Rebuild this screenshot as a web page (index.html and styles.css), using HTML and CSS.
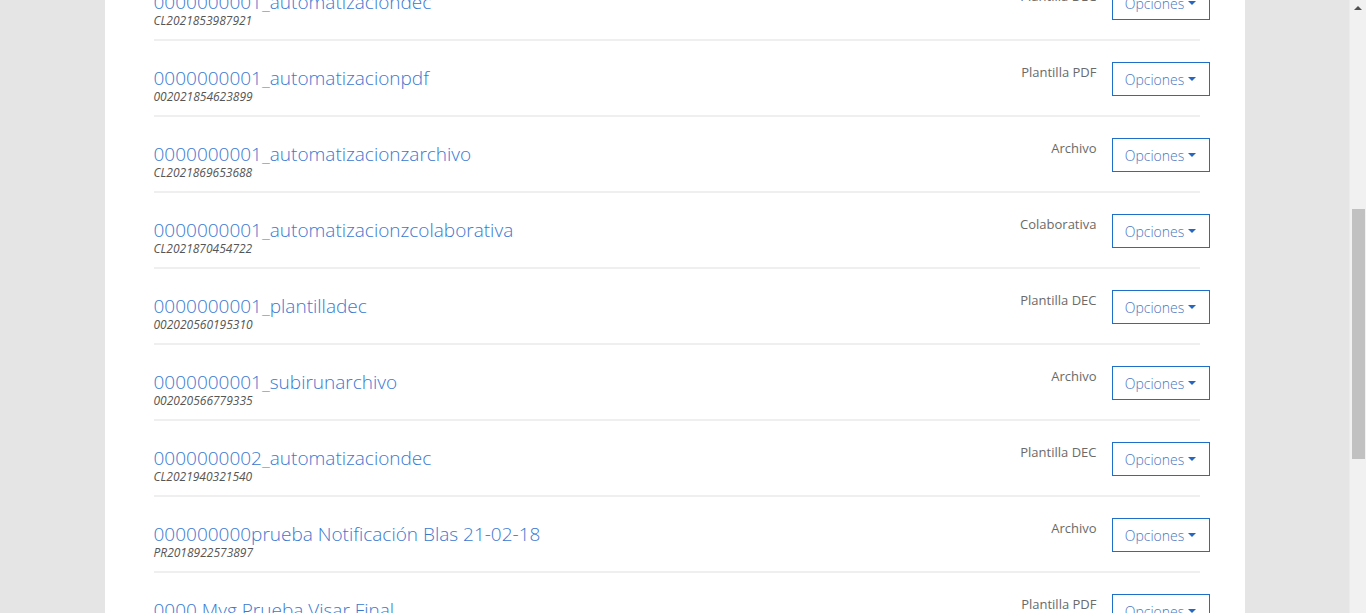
FILE: index.html
```html
<!DOCTYPE html>
<html lang="es">
<head>
<meta charset="utf-8">
<title>Documentos</title>
<link rel="stylesheet" href="styles.css">
</head>
<body>
<div class="viewport">
  <main class="page">
    <section class="panel">
      <ul class="doc-list">
        <li class="doc">
          <div class="doc-info"><a class="doc-title" href="#">0000000001_automatizaciondec</a><span class="doc-code">CL2021853987921</span></div>
          <div class="doc-actions"><span class="doc-type">Plantilla DEC</span><button class="btn-opt">Opciones<span class="caret"></span></button></div>
        </li>
        <li class="doc">
          <div class="doc-info"><a class="doc-title" href="#">0000000001_automatizacionpdf</a><span class="doc-code">002021854623899</span></div>
          <div class="doc-actions"><span class="doc-type">Plantilla PDF</span><button class="btn-opt">Opciones<span class="caret"></span></button></div>
        </li>
        <li class="doc">
          <div class="doc-info"><a class="doc-title" href="#">0000000001_automatizacionzarchivo</a><span class="doc-code">CL2021869653688</span></div>
          <div class="doc-actions"><span class="doc-type">Archivo</span><button class="btn-opt">Opciones<span class="caret"></span></button></div>
        </li>
        <li class="doc">
          <div class="doc-info"><a class="doc-title" href="#">0000000001_automatizacionzcolaborativa</a><span class="doc-code">CL2021870454722</span></div>
          <div class="doc-actions"><span class="doc-type">Colaborativa</span><button class="btn-opt">Opciones<span class="caret"></span></button></div>
        </li>
        <li class="doc">
          <div class="doc-info"><a class="doc-title" href="#">0000000001_plantilladec</a><span class="doc-code">002020560195310</span></div>
          <div class="doc-actions"><span class="doc-type">Plantilla DEC</span><button class="btn-opt">Opciones<span class="caret"></span></button></div>
        </li>
        <li class="doc">
          <div class="doc-info"><a class="doc-title" href="#">0000000001_subirunarchivo</a><span class="doc-code">002020566779335</span></div>
          <div class="doc-actions"><span class="doc-type">Archivo</span><button class="btn-opt">Opciones<span class="caret"></span></button></div>
        </li>
        <li class="doc">
          <div class="doc-info"><a class="doc-title" href="#">0000000002_automatizaciondec</a><span class="doc-code">CL2021940321540</span></div>
          <div class="doc-actions"><span class="doc-type">Plantilla DEC</span><button class="btn-opt">Opciones<span class="caret"></span></button></div>
        </li>
        <li class="doc">
          <div class="doc-info"><a class="doc-title" href="#">000000000prueba Notificación Blas 21-02-18</a><span class="doc-code">PR2018922573897</span></div>
          <div class="doc-actions"><span class="doc-type">Archivo</span><button class="btn-opt">Opciones<span class="caret"></span></button></div>
        </li>
        <li class="doc">
          <div class="doc-info"><a class="doc-title" href="#">0000 Myg Prueba Visar Final</a><span class="doc-code">PR2018922573901</span></div>
          <div class="doc-actions"><span class="doc-type">Plantilla PDF</span><button class="btn-opt">Opciones<span class="caret"></span></button></div>
        </li>
      </ul>
    </section>
  </main>
  <div class="scrollbar">
    <div class="sb-arrow"></div>
    <div class="sb-track">
      <div class="sb-thumb"></div>
    </div>
  </div>
</div>
</body>
</html>
```
FILE: styles.css
```css
html, body {
  margin: 0;
  padding: 0;
  height: 613px;
  overflow: hidden;
}
body {
  font-family: "Open Sans", "Liberation Sans", sans-serif;
  background: #e5e5e5;
}
.viewport {
  display: flex;
  height: 613px;
}
.page {
  flex: 1;
  display: flex;
  justify-content: center;
  overflow: hidden;
}
.panel {
  width: 1140px;
  background: #ffffff;
  padding: 0 45px 0 49px;
  box-sizing: border-box;
  overflow: hidden;
}
.doc-list {
  list-style: none;
  margin: -35px 0 0 0;
  padding: 0;
}
.doc {
  display: flex;
  justify-content: space-between;
  align-items: flex-start;
  padding: 21px 0 14px 0;
  border-bottom: 2px solid #efefef;
  height: 39px;
}
.doc-info {
  display: flex;
  flex-direction: column;
  padding-top: 5px;
}
.doc-title {
  font-size: 19px;
  line-height: 23px;
  font-weight: 300;
  color: #3a78d0;
  text-decoration: none;
  white-space: nowrap;
}
.doc-code {
  font-size: 12px;
  line-height: 14px;
  font-style: italic;
  font-weight: 400;
  color: #555555;
}
.doc-actions {
  display: flex;
  align-items: flex-start;
  gap: 15px;
  margin-right: -10px;
}
.doc-type {
  font-size: 13px;
  line-height: 19px;
  color: #6a6a6a;
  margin-top: 1px;
}
.btn-opt {
  display: flex;
  align-items: center;
  justify-content: center;
  width: 98px;
  height: 34px;
  padding: 0;
  background: #ffffff;
  border: 1px solid #1f6ec8;
  border-radius: 0;
  font-family: "Open Sans", "Liberation Sans", sans-serif;
  font-size: 14px;
  font-weight: 300;
  color: #4a74c0;
  cursor: pointer;
}
.caret {
  display: inline-block;
  width: 0;
  height: 0;
  margin-left: 4px;
  border-top: 4px solid #2566c0;
  border-left: 4px solid transparent;
  border-right: 4px solid transparent;
}
.scrollbar {
  width: 17px;
  display: flex;
  flex-direction: column;
  background: #f1f1f1;
  border-left: 1px solid #ebebeb;
  box-sizing: border-box;
}
.sb-arrow {
  height: 17px;
  display: flex;
  align-items: center;
  justify-content: center;
}
.sb-arrow::before {
  content: "";
  width: 0;
  height: 0;
  border-bottom: 4px solid #505050;
  border-left: 4px solid transparent;
  border-right: 4px solid transparent;
  margin-top: -2px;
}
.sb-track {
  flex: 1;
  display: flex;
  flex-direction: column;
  padding: 192px 1px 0 2px;
}
.sb-thumb {
  height: 250px;
  background: #c1c1c1;
}
```
